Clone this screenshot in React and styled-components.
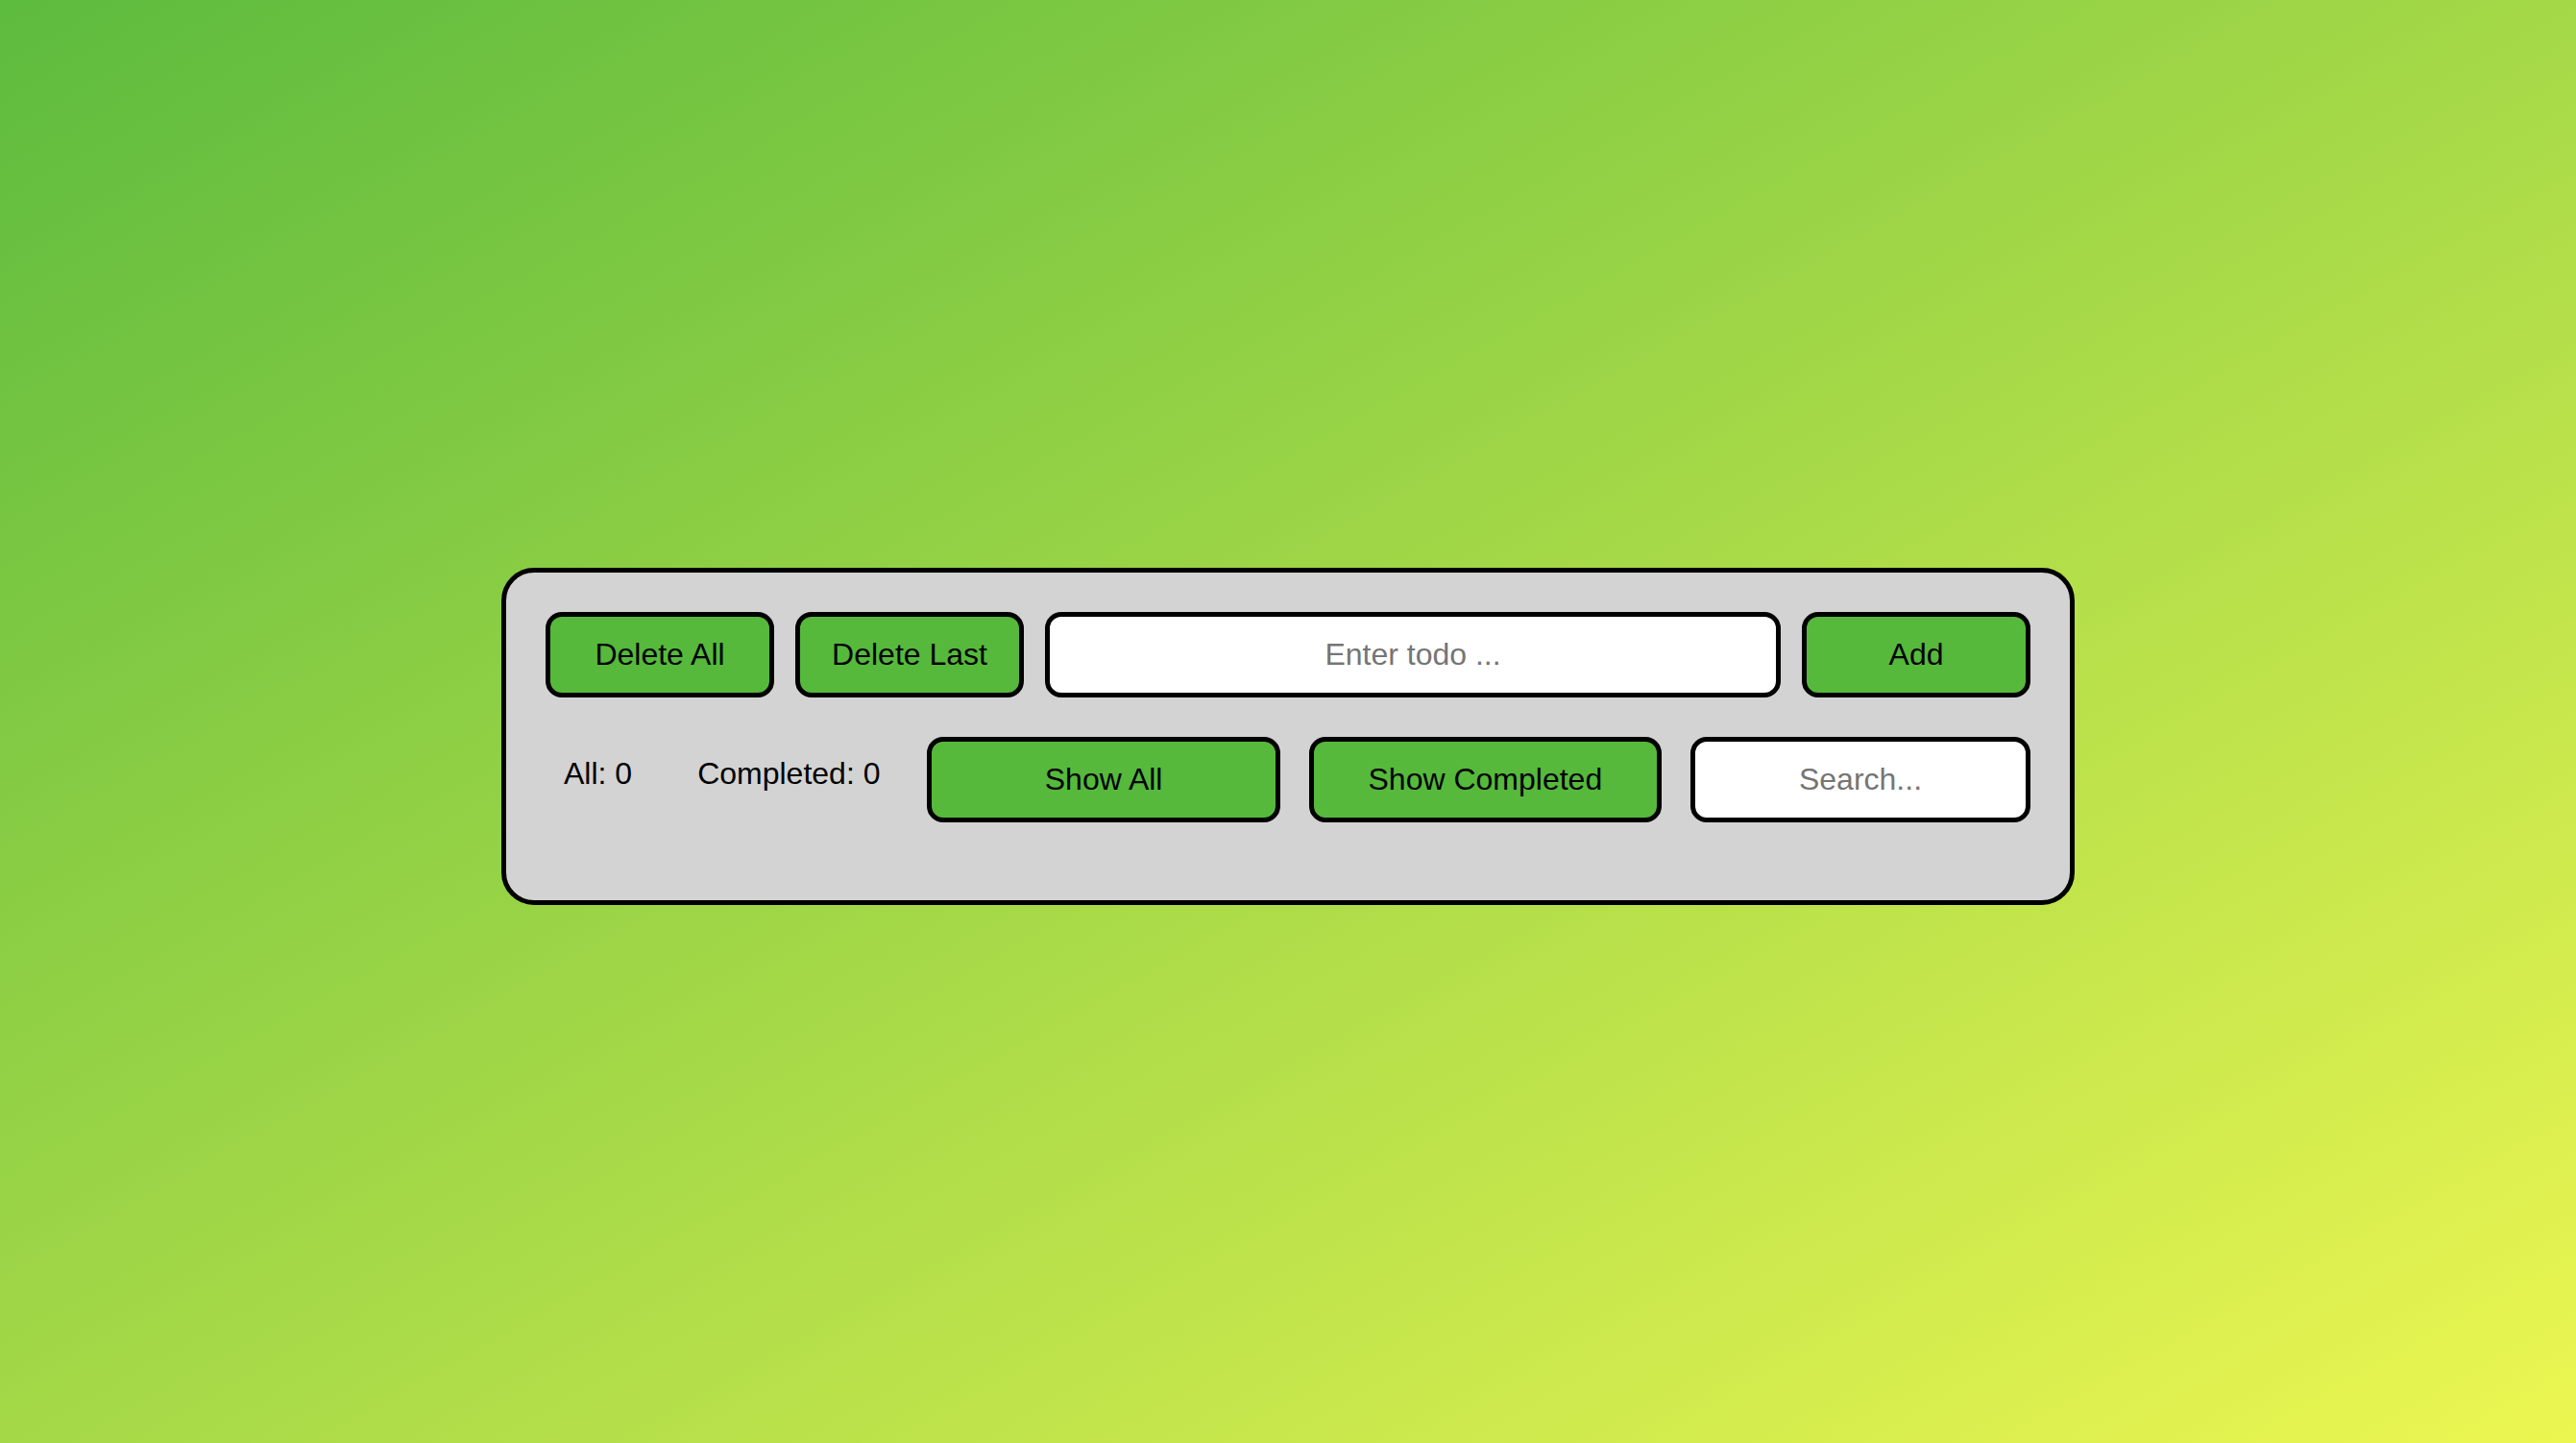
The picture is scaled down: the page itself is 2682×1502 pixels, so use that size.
import React, { useState } from "react";
import styled, { createGlobalStyle } from "styled-components";

const GlobalStyle = createGlobalStyle`
  html, body {
    margin: 0;
    padding: 0;
  }
  body {
    font-family: "Liberation Sans", Arial, Helvetica, sans-serif;
  }
`;

const Page = styled.div`
  box-sizing: border-box;
  min-height: 100vh;
  padding-top: 31px;
  display: flex;
  align-items: center;
  justify-content: center;
  background: linear-gradient(to bottom right, #5dbb3e, #ecf651);
`;

const Card = styled.div`
  width: 1638px;
  box-sizing: border-box;
  padding: 41px 41px 81px;
  background: #d3d3d3;
  border: 5px solid #000;
  border-radius: 34px;
  display: flex;
  flex-direction: column;
  gap: 41px;
`;

const Row = styled.div`
  display: flex;
  align-items: center;
  gap: ${(p) => p.$gap}px;
`;

const Button = styled.button`
  box-sizing: border-box;
  height: 89px;
  width: ${(p) => (p.$width ? `${p.$width}px` : "auto")};
  flex: ${(p) => (p.$grow ? 1 : "none")};
  background: #56b93c;
  color: #000;
  border: 5px solid #000;
  border-radius: 17px;
  font-family: inherit;
  font-size: 32px;
  cursor: pointer;
`;

const Input = styled.input`
  box-sizing: border-box;
  height: 89px;
  width: ${(p) => (p.$width ? `${p.$width}px` : "auto")};
  flex: ${(p) => (p.$grow ? 1 : "none")};
  min-width: 0;
  background: #fff;
  border: 5px solid #000;
  border-radius: 17px;
  font-family: inherit;
  font-size: 32px;
  text-align: center;
  outline: none;

  &::placeholder {
    color: #757575;
  }
`;

const Stat = styled.span`
  margin: 0 19px;
  padding-bottom: 12px;
  font-size: 32px;
  color: #000;
  white-space: nowrap;
`;

export default function App() {
  const [todos, setTodos] = useState([]);
  const [text, setText] = useState("");
  const [search, setSearch] = useState("");

  const addTodo = () => {
    if (!text.trim()) return;
    setTodos([...todos, { id: Date.now(), text, done: false }]);
    setText("");
  };

  const completed = todos.filter((t) => t.done).length;

  return (
    <>
      <GlobalStyle />
      <Page>
        <Card>
          <Row $gap={22}>
            <Button $width={238} onClick={() => setTodos([])}>
              Delete All
            </Button>
            <Button $width={238} onClick={() => setTodos(todos.slice(0, -1))}>
              Delete Last
            </Button>
            <Input
              $grow
              placeholder="Enter todo ..."
              value={text}
              onChange={(e) => setText(e.target.value)}
            />
            <Button $width={238} onClick={addTodo}>
              Add
            </Button>
          </Row>
          <Row $gap={30}>
            <Stat>All: {todos.length}</Stat>
            <Stat>Completed: {completed}</Stat>
            <Button $grow>Show All</Button>
            <Button $grow>Show Completed</Button>
            <Input
              $width={354}
              placeholder="Search..."
              value={search}
              onChange={(e) => setSearch(e.target.value)}
            />
          </Row>
        </Card>
      </Page>
    </>
  );
}
